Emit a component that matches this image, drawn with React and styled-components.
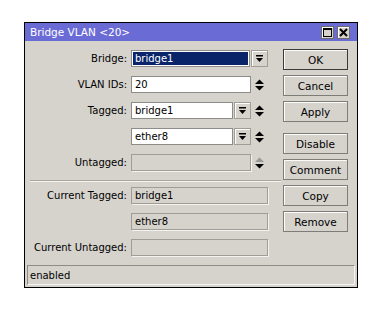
import React from "react";
import styled, { createGlobalStyle } from "styled-components";

const Global = createGlobalStyle`
  * { box-sizing: border-box; }
  body {
    margin: 0;
    background: #ffffff;
  }
`;

const Page = styled.div`
  padding: 22px 0 0 24px;
`;

const Window = styled.div`
  width: 334px;
  height: 266px;
  border: 1px solid #000;
  background: #d6d3cd;
  display: flex;
  flex-direction: column;
  font-family: "DejaVu Sans", sans-serif;
  font-size: 10px;
  color: #000;
`;

const TitleBar = styled.div`
  height: 18px;
  background: #6b6bd6;
  color: #fff;
  display: flex;
  align-items: center;
  justify-content: space-between;
  padding: 0 7px 0 5px;
  font-size: 10.5px;
`;

const TitleButtons = styled.div`
  display: flex;
  gap: 3px;
`;

const TitleBtn = styled.div`
  width: 13px;
  height: 13px;
  background: #d6d3cd;
  border: 1px solid #6f6d69;
  box-shadow: inset 1px 1px 0 #fff;
  display: flex;
  align-items: center;
  justify-content: center;
`;

const Body = styled.div`
  display: flex;
  flex: 1;
  padding-top: 8px;
`;

const Form = styled.div`
  width: 256px;
  padding-top: 1px;
`;

const Row = styled.div`
  display: flex;
  align-items: center;
  height: 17px;
  margin-bottom: ${(p) => (p.$last ? 0 : 9)}px;
`;

const Label = styled.div`
  width: 102px;
  text-align: right;
  margin-right: 4px;
  white-space: nowrap;
`;

const Controls = styled.div`
  width: 137px;
  height: 17px;
  display: flex;
`;

const Field = styled.div`
  flex: 1;
  height: 17px;
  display: flex;
  align-items: center;
  padding-left: 3px;
  white-space: nowrap;
  border: 1px solid ${(p) => (p.$disabled ? "#a09d96" : "#8e8c88")};
  background: ${(p) =>
    p.$selected ? "#0a246a" : p.$disabled ? "transparent" : "#fff"};
  color: ${(p) => (p.$selected ? "#fff" : "#000")};
  box-shadow: ${(p) =>
    p.$selected
      ? "inset 0 0 0 1px #fff"
      : p.$disabled
      ? "1px 1px 0 #f4f3f1"
      : "none"};
`;

const DropBtn = styled.div`
  width: 17px;
  height: 17px;
  margin-left: 1px;
  border: 1px solid #a09d96;
  box-shadow: inset 1px 1px 0 #fff;
  display: flex;
  align-items: center;
  justify-content: center;
`;

const Spin = styled.div`
  width: 17px;
  height: 17px;
  display: flex;
  align-items: center;
  justify-content: center;
`;

const Separator = styled.div`
  margin: 0 0 5px 5px;
  height: 2px;
  border-top: 1px solid #a8a59f;
  border-bottom: 1px solid #f5f4f2;
`;

const Group = styled.div`
  margin-bottom: 9px;
`;

const Buttons = styled.div`
  width: 65px;
  margin-left: 2px;
  display: flex;
  flex-direction: column;
`;

const Button = styled.div`
  height: 21px;
  margin-bottom: ${(p) => (p.$gapAfter ? 11 : 5)}px;
  border: 1px solid ${(p) => (p.$default ? "#3a3a3a" : "#7e7c78")};
  box-shadow: inset 1px 1px 0 #fbfbfa;
  display: flex;
  align-items: center;
  justify-content: center;
  font-size: 10.5px;
`;

const StatusBar = styled.div`
  height: 20px;
  margin: 8px 2px 2px 2px;
  border: 1px solid #8e8c88;
  border-right-color: #f5f4f2;
  border-bottom-color: #f5f4f2;
  display: flex;
  align-items: center;
  padding-left: 2px;
`;

const DropIcon = () => (
  <svg width="9" height="9" viewBox="0 0 9 9">
    <rect x="1" y="1" width="7" height="1.5" fill="#000" />
    <polygon points="1,4 8,4 4.5,8" fill="#000" />
  </svg>
);

const SpinIcon = ({ dimUp }) => (
  <svg width="11" height="14" viewBox="0 0 11 14">
    <polygon points="1,6 10,6 5.5,1.5" fill={dimUp ? "#9a9893" : "#000"} />
    <polygon points="1,8 10,8 5.5,12.5" fill="#000" />
  </svg>
);

const FormRow = ({ label, value, selected, disabled, drop, spin, dimUp, last }) => (
  <Row $last={last}>
    <Label>{label}</Label>
    <Controls>
      <Field $selected={selected} $disabled={disabled}>
        {value}
      </Field>
      {drop && (
        <DropBtn>
          <DropIcon />
        </DropBtn>
      )}
      {spin && (
        <Spin>
          <SpinIcon dimUp={dimUp} />
        </Spin>
      )}
    </Controls>
  </Row>
);

export default function App() {
  return (
    <Page>
      <Global />
      <Window>
        <TitleBar>
          <span>Bridge VLAN &lt;20&gt;</span>
          <TitleButtons>
            <TitleBtn>
              <svg width="9" height="9" viewBox="0 0 9 9">
                <rect x="0.5" y="0.5" width="8" height="8" fill="none" stroke="#000" />
                <rect x="0" y="0" width="9" height="2" fill="#000" />
              </svg>
            </TitleBtn>
            <TitleBtn>
              <svg width="9" height="9" viewBox="0 0 9 9">
                <path d="M1 1 L8 8 M8 1 L1 8" stroke="#000" strokeWidth="2" />
              </svg>
            </TitleBtn>
          </TitleButtons>
        </TitleBar>
        <Body>
          <Form>
            <Group>
              <FormRow label="Bridge:" value="bridge1" selected drop />
              <FormRow label="VLAN IDs:" value="20" spin />
              <FormRow label="Tagged:" value="bridge1" drop spin />
              <FormRow label="" value="ether8" drop spin />
              <FormRow label="Untagged:" value="" disabled spin dimUp last />
            </Group>
            <Separator />
            <FormRow label="Current Tagged:" value="bridge1" disabled />
            <FormRow label="" value="ether8" disabled />
            <FormRow label="Current Untagged:" value="" disabled last />
          </Form>
          <Buttons>
            <Button $default>OK</Button>
            <Button>Cancel</Button>
            <Button $gapAfter>Apply</Button>
            <Button>Disable</Button>
            <Button>Comment</Button>
            <Button>Copy</Button>
            <Button>Remove</Button>
          </Buttons>
        </Body>
        <StatusBar>enabled</StatusBar>
      </Window>
    </Page>
  );
}
